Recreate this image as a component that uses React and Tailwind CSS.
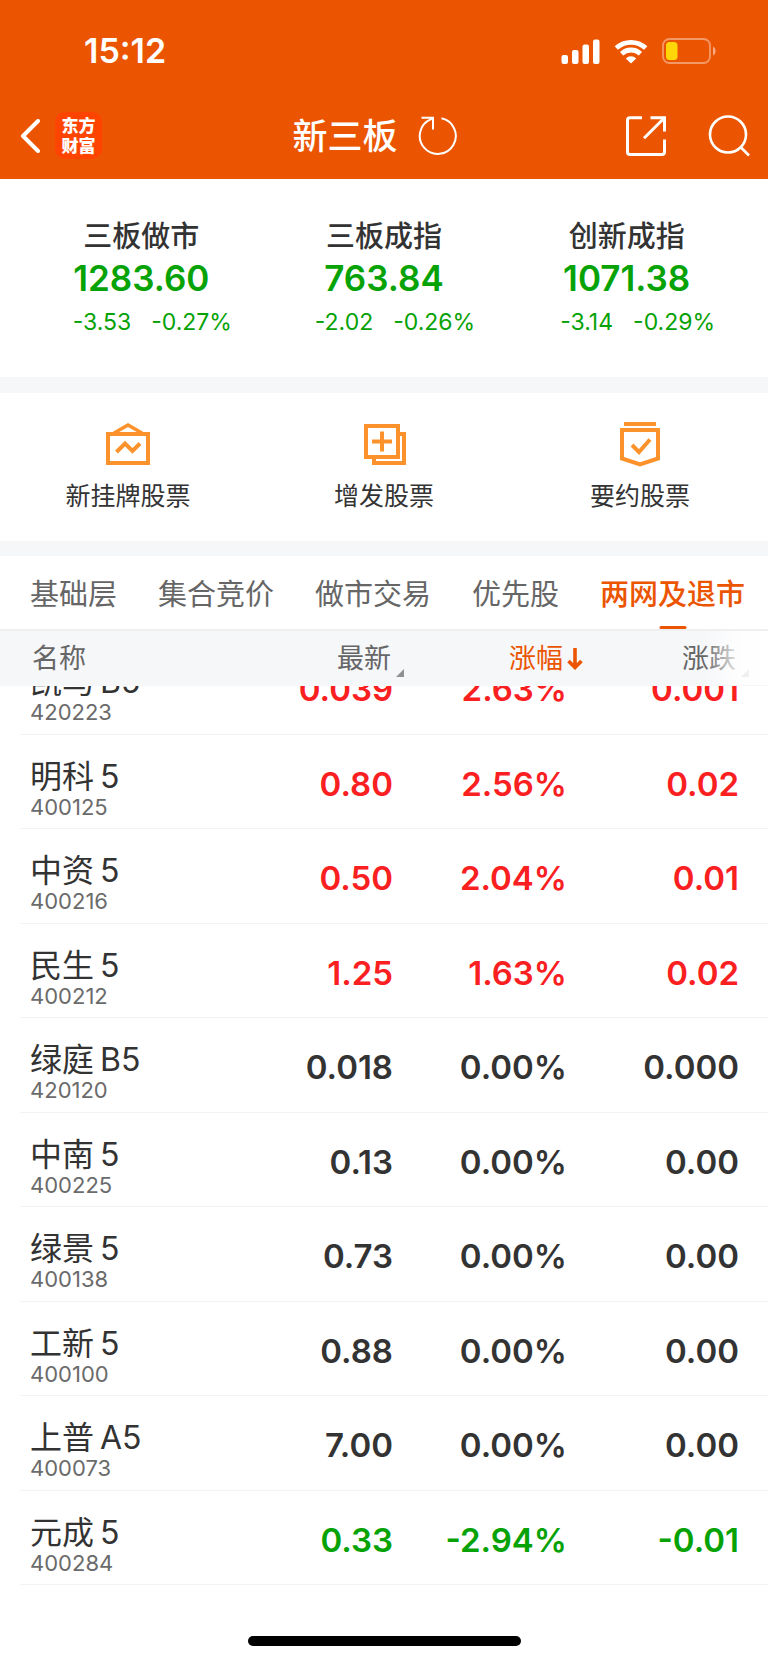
import React, { useState } from 'react'
import clsx from 'clsx'

const INDICES = [
  { name: '三板做市', value: '1283.60', change: '-3.53', percent: '-0.27%' },
  { name: '三板成指', value: '763.84', change: '-2.02', percent: '-0.26%' },
  { name: '创新成指', value: '1071.38', change: '-3.14', percent: '-0.29%' },
]

const TABS = ['基础层', '集合竞价', '做市交易', '优先股', '两网及退市']

const STOCKS = [
  { name: '凯马', suffix: 'B5', code: '420223', price: '0.039', percent: '2.63%', change: '0.001', trend: 'up' },
  { name: '明科', suffix: '5', code: '400125', price: '0.80', percent: '2.56%', change: '0.02', trend: 'up' },
  { name: '中资', suffix: '5', code: '400216', price: '0.50', percent: '2.04%', change: '0.01', trend: 'up' },
  { name: '民生', suffix: '5', code: '400212', price: '1.25', percent: '1.63%', change: '0.02', trend: 'up' },
  { name: '绿庭', suffix: 'B5', code: '420120', price: '0.018', percent: '0.00%', change: '0.000', trend: 'flat' },
  { name: '中南', suffix: '5', code: '400225', price: '0.13', percent: '0.00%', change: '0.00', trend: 'flat' },
  { name: '绿景', suffix: '5', code: '400138', price: '0.73', percent: '0.00%', change: '0.00', trend: 'flat' },
  { name: '工新', suffix: '5', code: '400100', price: '0.88', percent: '0.00%', change: '0.00', trend: 'flat' },
  { name: '上普', suffix: 'A5', code: '400073', price: '7.00', percent: '0.00%', change: '0.00', trend: 'flat' },
  { name: '元成', suffix: '5', code: '400284', price: '0.33', percent: '-2.94%', change: '-0.01', trend: 'down' },
]

const TREND_COLORS = {
  up: 'text-[#f9201f]',
  flat: 'text-[#333333]',
  down: 'text-[#06a206]',
}

const SignalIcon = () => (
  <svg width="39" height="25" viewBox="0 0 39 25" fill="#fff">
    <rect x="0.5" y="16" width="6.5" height="9" rx="2" />
    <rect x="11" y="11" width="6.5" height="14" rx="2" />
    <rect x="21.5" y="5.5" width="6.5" height="19.5" rx="2" />
    <rect x="32" y="0.5" width="6.5" height="24.5" rx="2" />
  </svg>
)

const WifiIcon = () => (
  <svg width="34" height="25" viewBox="0 0 34 25" fill="none" stroke="#fff" strokeWidth="4.8">
    <path d="M2.3 9.1 A21.5 21.5 0 0 1 31.7 9.1" />
    <path d="M7.6 14.7 A13.8 13.8 0 0 1 26.4 14.7" />
    <path d="M17 24.6 L11.8 19.4 A7.6 7.6 0 0 1 22.2 19.4 Z" fill="#fff" stroke="none" />
  </svg>
)

const BatteryIcon = () => (
  <svg width="54" height="26" viewBox="0 0 54 26">
    <rect x="1" y="1" width="47" height="24" rx="6.5" fill="none" stroke="#fff" strokeOpacity="0.4" strokeWidth="1.8" />
    <rect x="4" y="4" width="11.5" height="18" rx="3.5" fill="#ffd60a" />
    <path d="M51 8.5 C54.4 10 54.4 16 51 17.5 Z" fill="#fff" fillOpacity="0.5" />
  </svg>
)

const BackIcon = () => (
  <svg width="20" height="34" viewBox="0 0 20 34" fill="none" stroke="#fff" strokeWidth="4" strokeLinecap="round" strokeLinejoin="round">
    <path d="M18 2 L3 17 L18 32" />
  </svg>
)

const RefreshIcon = () => (
  <svg width="40" height="40" viewBox="0 0 40 40" fill="none" stroke="#fff" strokeWidth="2">
    <path d="M23.5 2.3 A18 18 0 1 1 12.6 3.4 L15.2 2" />
    <path d="M3.5 1.8 H15 V13.5" />
  </svg>
)

const ShareIcon = () => (
  <svg width="40" height="40" viewBox="0 0 40 40" fill="none" stroke="#fff" strokeWidth="3">
    <path d="M16 1.8 H4 Q1.5 1.8 1.5 4.3 V36 Q1.5 38.5 4 38.5 H36 Q38.5 38.5 38.5 36 V23.5" />
    <path d="M24.5 1.8 H38.5 V15.5" />
    <path d="M38 2.3 L18 22.3" />
  </svg>
)

const SearchIcon = () => (
  <svg width="42" height="42" viewBox="0 0 42 42" fill="none" stroke="#fff" strokeWidth="2.6">
    <circle cx="20" cy="19.5" r="18" />
    <path d="M32 31.5 L41 40.5" />
  </svg>
)

const ListingIcon = () => (
  <svg width="44" height="44" viewBox="0 0 44 44" fill="none" stroke="#fb922b" strokeWidth="4">
    <path d="M2 12 H42 V41 H2 Z" />
    <path d="M8 11 L22 3 L36 11" strokeWidth="3.6" />
    <path d="M10.5 30 L19 21.5 L26.5 29 L34 21.5" />
  </svg>
)

const IssueIcon = () => (
  <svg width="44" height="44" viewBox="0 0 44 44" fill="none" stroke="#fb922b" strokeWidth="4">
    <path d="M4 4 H36 V35 H4 Z" />
    <path d="M37 12 H42 V41 H12 V36" />
    <path d="M10 19.5 H30 M20 9.5 V29.5" />
  </svg>
)

const OfferIcon = () => (
  <svg width="44" height="46" viewBox="0 0 44 46" fill="none" stroke="#fb922b" strokeWidth="4">
    <path d="M6 3 H38" />
    <path d="M4 9 H40 V37.5 L22 43.5 L4 37.5 Z" />
    <path d="M14 24 L21 31 L32 18.5" />
  </svg>
)

const ACTIONS = [
  { label: '新挂牌股票', icon: ListingIcon },
  { label: '增发股票', icon: IssueIcon },
  { label: '要约股票', icon: OfferIcon },
]

const SortCorner = () => (
  <svg width="8" height="8" viewBox="0 0 8 8" className="absolute bottom-0 left-full ml-[5px]" fill="#8f8f94">
    <path d="M8 0 V8 H0 Z" />
  </svg>
)

const SortArrow = () => (
  <svg width="16" height="22" viewBox="0 0 16 22" className="absolute top-[7px] left-full ml-1" fill="none" stroke="#eb5502" strokeWidth="3.6">
    <path d="M8 0 V20 M1.5 13 L8 19.5 L14.5 13" />
  </svg>
)

const StatusBar = () => (
  <div className="flex h-[94px] items-center justify-between pt-2 pl-[84px] pr-[52px]">
    <span className="text-[34px] leading-10 font-semibold">15:12</span>
    <div className="flex items-center gap-[14px]">
      <SignalIcon />
      <WifiIcon />
      <BatteryIcon />
    </div>
  </div>
)

const NavBar = () => (
  <div className="grid h-[85px] grid-cols-[1fr_auto_1fr] items-center pr-[18px] pb-[2px] pl-5">
    <div className="flex items-center gap-[15px]">
      <button type="button" aria-label="返回">
        <BackIcon />
      </button>
      <a href="#" className="flex size-[47px] flex-col items-center justify-center rounded-[10px] bg-[#ff4400] text-[17px] leading-5 font-black">
        <span>东方</span>
        <span>财富</span>
      </a>
    </div>
    <div className="flex items-center gap-5 pr-5">
      <h1 className="text-[35px] leading-10 font-medium">新三板</h1>
      <button type="button" aria-label="刷新">
        <RefreshIcon />
      </button>
    </div>
    <div className="flex items-center justify-end gap-[42px]">
      <button type="button" aria-label="分享">
        <ShareIcon />
      </button>
      <button type="button" aria-label="搜索">
        <SearchIcon />
      </button>
    </div>
  </div>
)

const StockRow = ({ stock, clipped }) => {
  // the top row is partly scrolled under the header
  const box = clsx('flex border-b border-[#f3f3f5]', clipped && 'h-[49px] items-end overflow-hidden')
  const inner = 'flex h-[94px] w-full shrink-0 group-even:h-[93px]'
  const numbers = [stock.price, stock.percent, stock.change]

  return (
    <tr className="group">
      <td className="p-0 pl-5">
        <div className={clsx(box, 'pl-[10px]')}>
          <div className={clsx(inner, 'flex-col justify-center pt-[14px]')}>
            <span className="flex gap-[6px] text-[32px] leading-9 whitespace-nowrap text-[#333333]">
              <span>{stock.name}</span>
              <span>{stock.suffix}</span>
            </span>
            <span className="text-[22px] leading-6 text-[#6b6b6b]">{stock.code}</span>
          </div>
        </div>
      </td>
      {numbers.map((n, i) => (
        <td key={i} className="p-0">
          <div className={clsx(box, i === 2 && 'pr-[29px]')}>
            <div className={clsx(inner, 'items-center justify-end pt-1 text-[33px] leading-10 font-semibold', TREND_COLORS[stock.trend])}>
              {n}
            </div>
          </div>
        </td>
      ))}
    </tr>
  )
}

const App = () => {
  const [tab, setTab] = useState('两网及退市')

  return (
    <div className="min-h-screen overflow-x-hidden bg-white font-['Inter','Noto_Sans_CJK_SC',sans-serif] text-[#333333]">
      <header className="bg-[#eb5502] text-white">
        <StatusBar />
        <NavBar />
      </header>

      <section className="grid grid-cols-3 px-5 pt-[37px] pb-[35px]">
        {INDICES.map((item) => (
          <div key={item.name} className="flex flex-col items-center">
            <h2 className="text-[29px] leading-[42px] font-medium">{item.name}</h2>
            <span className="text-[35px] leading-10 font-semibold text-[#06a206]">{item.value}</span>
            <div className="flex gap-5 pt-[5px] pl-[22px] text-[23px] leading-[39px] text-[#06a206]">
              <span>{item.change}</span>
              <span>{item.percent}</span>
            </div>
          </div>
        ))}
      </section>

      <div className="h-4 bg-[#f6f7f9]" />

      <section className="grid h-[148px] grid-cols-3">
        {ACTIONS.map(({ label, icon: Icon }) => (
          <button key={label} type="button" className="flex flex-col items-center pt-7">
            <span className="flex h-[46px] items-center">
              <Icon />
            </span>
            <span className="mt-[11px] text-[25px] leading-9">{label}</span>
          </button>
        ))}
      </section>

      <div className="h-[15px] bg-[#f6f7f9]" />

      <nav className="flex h-[75px] gap-[41px] border-b-2 border-[#eeeff1] pl-[30px]">
        {TABS.map((name) => (
          <button
            key={name}
            type="button"
            onClick={() => setTab(name)}
            className={clsx(
              'relative shrink-0 pt-[5px] text-[29px] leading-10 whitespace-nowrap',
              tab === name ? 'font-medium text-[#eb5502]' : 'text-[#666666]'
            )}
          >
            {name}
            {tab === name && (
              <span className="absolute bottom-0 left-1/2 h-[3px] w-[27px] -translate-x-1/2 rounded-full bg-[#eb5502]" />
            )}
          </button>
        ))}
      </nav>

      <div className="relative">
        <table className="w-full table-fixed border-collapse">
          <thead>
            <tr className="h-[55px] bg-[#f6f7f9] text-[27px] leading-9 text-[#666666]">
              <th className="p-0 pl-8 text-left font-normal">名称</th>
              <th className="w-[174px] p-0 pr-[2px] text-right font-normal">
                <button type="button" className="relative">最新<SortCorner /></button>
              </th>
              <th className="w-[174px] p-0 pr-1 text-right font-normal text-[#eb5502]">
                <button type="button" className="relative">涨幅<SortArrow /></button>
              </th>
              <th className="w-[201px] p-0 pr-8 text-right font-normal">
                <button type="button" className="relative">涨跌<SortCorner /></button>
              </th>
            </tr>
          </thead>
          <tbody>
            {STOCKS.map((stock, i) => (
              <StockRow key={stock.code} stock={stock} clipped={i === 0} />
            ))}
          </tbody>
        </table>
        <div className="pointer-events-none absolute top-0 right-0 h-[54px] w-[64px] bg-linear-to-r from-transparent via-white/80 to-white" />
      </div>

      <div className="flex justify-center pt-[51px] pb-4">
        <div className="h-[10px] w-[273px] rounded-full bg-black" />
      </div>
    </div>
  )
}

export default App
